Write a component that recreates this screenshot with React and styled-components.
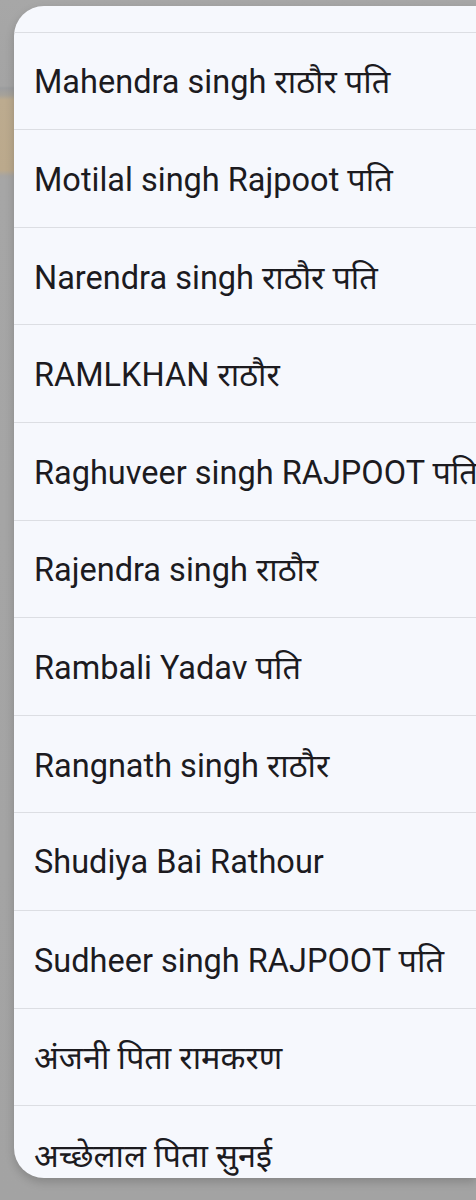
import React from 'react';
import styled, { createGlobalStyle } from 'styled-components';

const GlobalStyle = createGlobalStyle`
  html, body {
    margin: 0;
    padding: 0;
    overflow: hidden;
  }
  body {
    height: 1200px;
    background: linear-gradient(
      to bottom,
      #a7a7a7 0px,
      #a4a4a4 86px,
      #9c9d9f 88px,
      #a6a29a 95px,
      #bcab8f 100px,
      #bba98c 170px,
      #a7a5a2 176px,
      #a6a6a6 180px,
      #a3a3a3 1200px
    );
    font-family: Roboto, "Noto Sans", "Noto Sans Devanagari", sans-serif;
  }
`;

const Screen = styled.div`
  padding: 6px 0 0 14px;
  height: 1200px;
  box-sizing: border-box;
`;

const Sheet = styled.div`
  height: 1172px;
  padding-top: 25.6px;
  box-sizing: border-box;
  background: #f6f8fd;
  border-radius: 30px 0 0 30px;
  overflow: hidden;
  box-shadow: 0 4px 10px rgba(0, 0, 0, 0.18);
`;

const List = styled.ul`
  list-style: none;
  margin: 0;
  padding: 0;
`;

const Row = styled.li`
  height: 97.6px;
  box-sizing: border-box;
  display: flex;
  align-items: center;
  padding-left: 20px;
  border-top: 1.5px solid #dcdee3;
  white-space: nowrap;
  font-size: 32.5px;
  color: #1c1b1f;
`;

const NAMES = [
  'Mahendra singh राठौर पति',
  'Motilal singh Rajpoot पति',
  'Narendra singh राठौर पति',
  'RAMLKHAN राठौर',
  'Raghuveer singh RAJPOOT पति',
  'Rajendra singh राठौर',
  'Rambali Yadav पति',
  'Rangnath singh राठौर',
  'Shudiya Bai Rathour',
  'Sudheer singh RAJPOOT पति',
  'अंजनी पिता रामकरण',
  'अच्छेलाल पिता सुनई',
];

const App = () => (
  <Screen>
    <GlobalStyle />
    <Sheet>
      <List>
        {NAMES.map((name) => (
          <Row key={name}>{name}</Row>
        ))}
      </List>
    </Sheet>
  </Screen>
);

export default App;
